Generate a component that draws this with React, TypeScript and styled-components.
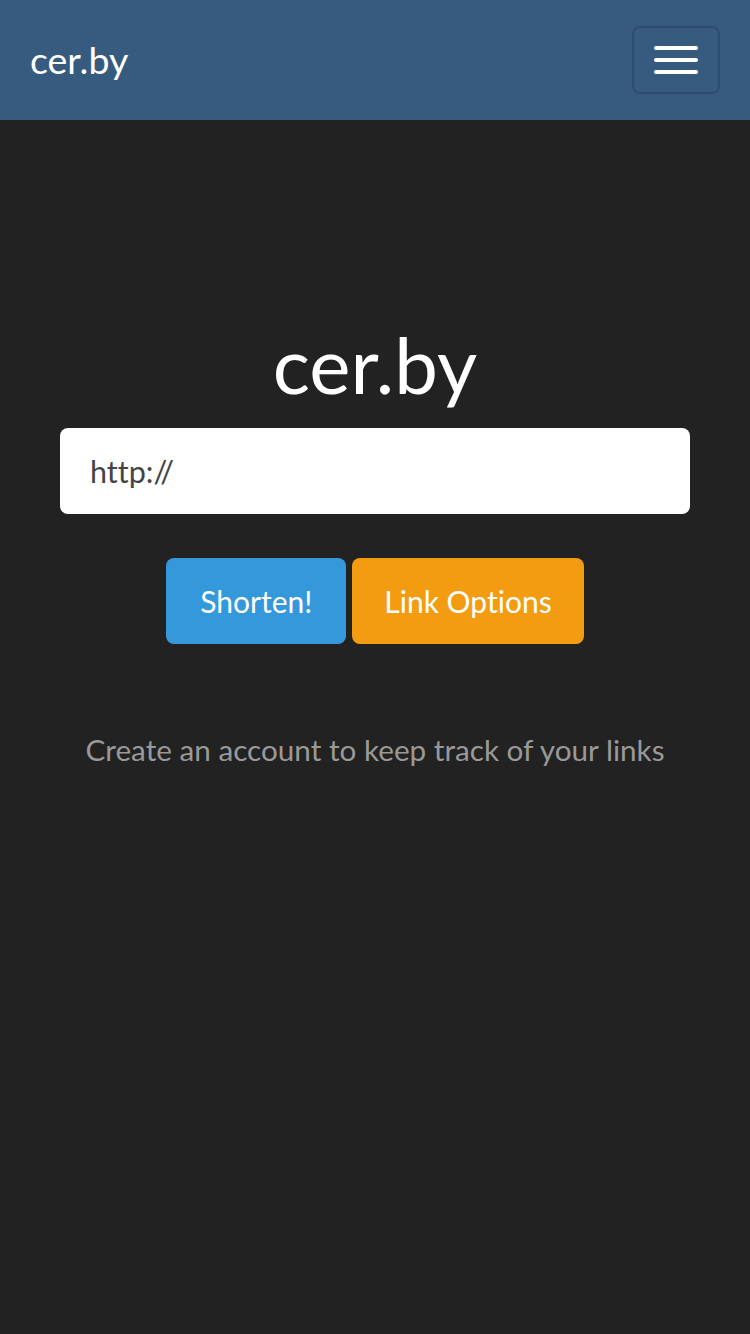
import styled, { createGlobalStyle } from "styled-components";

const GlobalStyle = createGlobalStyle`
    html, body {
        margin: 0;
        padding: 0;
        background: #222222;
        font-family: Lato, "Liberation Sans", sans-serif;
        font-variant-ligatures: none;
    }
    #root {
        min-height: 1334px;
        background: #222222;
    }
`;

const Navbar = styled.nav`
    height: 120px;
    background: #375a7f;
    display: flex;
    align-items: center;
    justify-content: space-between;
    padding: 0 30px;
    box-sizing: border-box;
`;

const Brand = styled.a`
    color: #ffffff;
    font-size: 37.5px;
    line-height: 1.5;
    text-decoration: none;
`;

const Toggler = styled.button`
    width: 88px;
    height: 68px;
    box-sizing: border-box;
    background: transparent;
    border: 2px solid rgba(0, 0, 0, 0.15);
    border-radius: 8px;
    display: flex;
    flex-direction: column;
    align-items: center;
    justify-content: center;
    gap: 8px;
    padding: 0;
    cursor: pointer;
`;

const TogglerBar = styled.span`
    display: block;
    width: 44px;
    height: 4px;
    border-radius: 2px;
    background: #ffffff;
`;

const Main = styled.main`
    padding: 198px 60px 0;
    display: flex;
    flex-direction: column;
    align-items: center;
`;

const Heading = styled.h1`
    margin: 0 0 16px;
    color: #ffffff;
    font-size: 78px;
    font-weight: 400;
    line-height: 1.2;
`;

const UrlInput = styled.input`
    width: 100%;
    height: 86px;
    box-sizing: border-box;
    border: none;
    border-radius: 8px;
    background: #ffffff;
    color: #444444;
    font-family: Lato, "Liberation Sans", sans-serif;
    font-variant-ligatures: none;
    font-size: 30.5px;
    padding: 0 30px;
    outline: none;
`;

const ButtonRow = styled.div`
    display: flex;
    gap: 6px;
    margin-top: 44px;
`;

const Button = styled.button<{ tone: string; padX: number }>`
    height: 86px;
    padding: 0 ${(props) => props.padX}px;
    border: none;
    border-radius: 8px;
    background: ${(props) => props.tone};
    color: #ffffff;
    font-family: Lato, "Liberation Sans", sans-serif;
    font-variant-ligatures: none;
    font-size: 30px;
    cursor: pointer;
`;

const Muted = styled.p`
    margin: 84px 0 0;
    color: #999999;
    font-size: 29.7px;
    line-height: 1.5;
    text-align: center;
`;

export default function App() {
    return (
        <>
            <GlobalStyle />
            <Navbar>
                <Brand href="#">cer.by</Brand>
                <Toggler aria-label="Toggle navigation">
                    <TogglerBar />
                    <TogglerBar />
                    <TogglerBar />
                </Toggler>
            </Navbar>
            <Main>
                <Heading>cer.by</Heading>
                <UrlInput defaultValue="http://" />
                <ButtonRow>
                    <Button tone="#3498db" padX={34}>
                        Shorten!
                    </Button>
                    <Button tone="#f39c12" padX={32}>
                        Link Options
                    </Button>
                </ButtonRow>
                <Muted>Create an account to keep track of your links</Muted>
            </Main>
        </>
    );
}
